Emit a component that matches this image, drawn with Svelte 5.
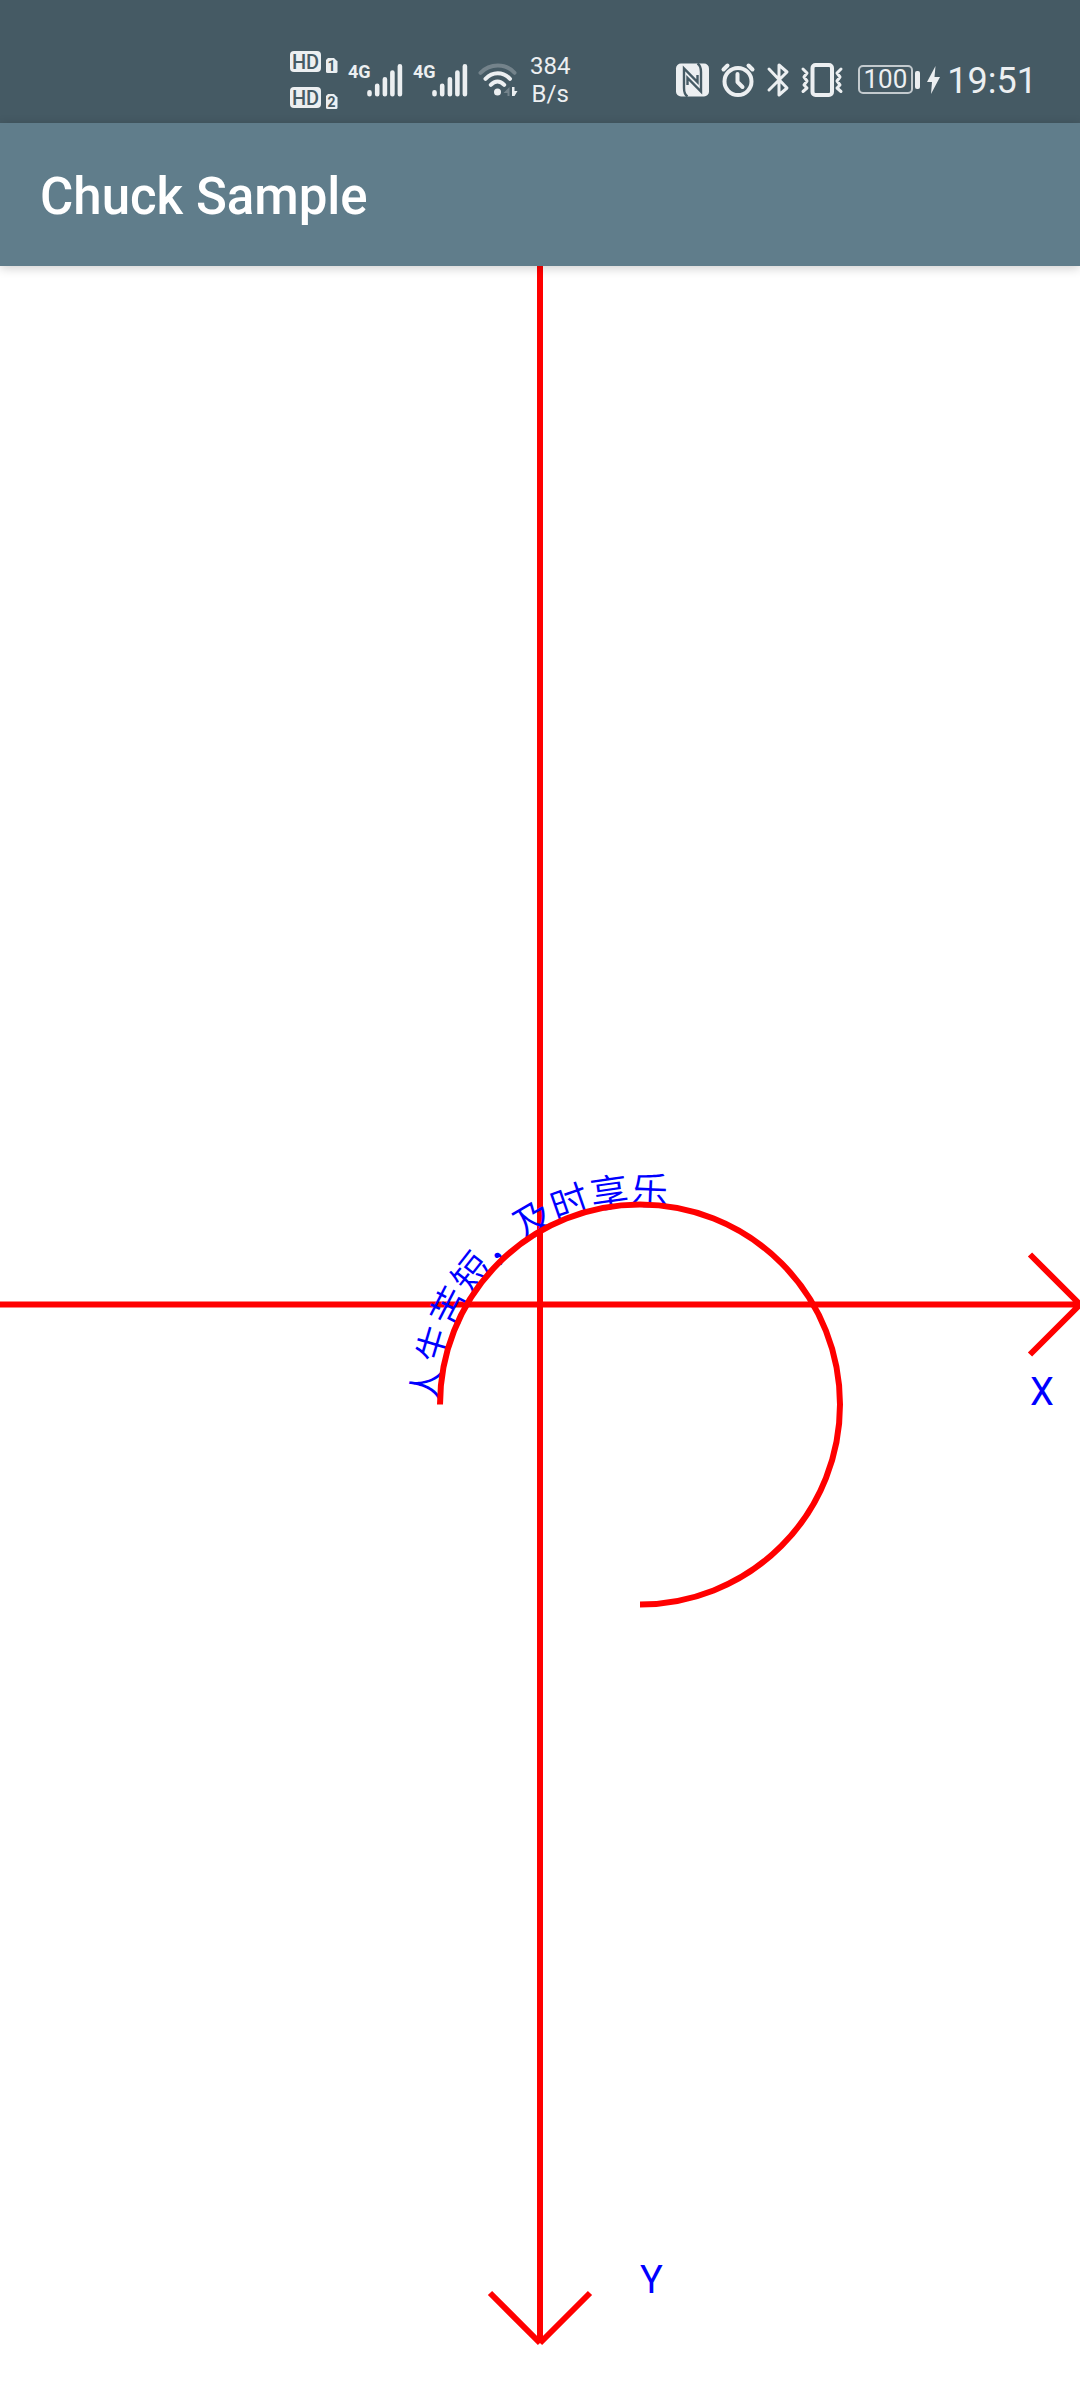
<script>
  const MARGIN = 100;
  const ARROW = 50;
  const RADIUS = 200;

  let width = $state(1080);
  let height = $state(2077);

  let cx = $derived(width / 2);
  let cy = $derived(height / 2);
  let ax = $derived(cx + MARGIN);
  let ay = $derived(cy + MARGIN);
  let arc = $derived(
    `M${ax - RADIUS} ${ay}A${RADIUS} ${RADIUS} 0 1 1 ${ax} ${ay + RADIUS}`
  );
</script>

{#snippet signal()}
  <svg class="icon" width="55" height="34" viewBox="0 0 55 34">
    <text class="net" x="0" y="15">4G</text>
    <path class="bars" d="M21.5 29.3V31.2M29.2 22.8V31.2M36.9 16.2V31.2M44.4 9.6V31.2M51.9 3.3V31.2" />
  </svg>
{/snippet}

<div class="screen">
  <div class="status">
    <div class="group left">
      <svg class="icon" width="48" height="58" viewBox="0 0 48 58">
        <rect x="0" y="0" width="31" height="21" rx="4" />
        <text class="hd" x="15.5" y="18">HD</text>
        <path d="M38 7H44L47.500 10.500V20.500Q47.500 22 46 22H37.500Q36 22 36 20.500V9Z" />
        <text class="sim" x="41.500" y="19.500">1</text>
        <rect x="0" y="36" width="31" height="21" rx="4" />
        <text class="hd" x="15.5" y="54">HD</text>
        <path d="M38 43H44L47.500 46.500V56.500Q47.500 58 46 58H37.500Q36 58 36 56.500V45Z" />
        <text class="sim" x="41.500" y="55.500">2</text>
      </svg>
      {@render signal()}
      {@render signal()}
      <svg class="icon wifi" width="40" height="34" viewBox="0 0 40 34">
        <path class="line faint" d="M2.500 9.800C12 0 28 0 36.500 9.800" />
        <path class="line" d="M7.500 15.800C14.500 8.500 25 8.500 32 15.800M12.800 21.800C17 17.500 22 17.500 26.200 21.800" />
        <circle cx="19.500" cy="29" r="3.500" />
        <path class="dim" d="M31.500 24V33H29.500V30H25.500Z" />
        <path d="M34 24V33H36.500L39.500 28H36.500V24Z" />
      </svg>
      <span class="speed">384<br />B/s</span>
    </div>
    <div class="group right">
      <svg class="icon" width="33" height="34" viewBox="0 0 33 34">
        <rect y=".5" width="33" height="33" rx="5" />
        <path class="cut" d="M11.500 33.500C8.500 31.500 8 29 8 25V5.500L21.500 19V12M21.500 .5C24.500 2.500 25 5 25 9V28.500L11.500 15V22" />
      </svg>
      <svg class="icon" width="34" height="34" viewBox="0 0 34 34">
        <circle class="line" cx="17" cy="18.500" r="13.500" />
        <path class="line" d="M16.500 11V19L21.500 24" />
        <path class="line" d="M2.500 6.500L6.500 2.500M27.500 2.500L31.500 6.500" />
      </svg>
      <svg class="icon" width="22" height="36" viewBox="0 0 22 36">
        <path class="line thin" d="M2 7L20 26L12 33V3L20 10L2 28" />
      </svg>
      <svg class="icon" width="42" height="34" viewBox="0 0 42 34">
        <rect class="line" x="11.500" y="2" width="19.500" height="30" rx="3" />
        <path class="line thin" d="M2 6L6 10L3 14L6 18L3 22L6 25L2 28.500M40 6L36 10L39 14L36 18L39 22L36 25L40 28.500" />
      </svg>
      <div class="power">
        <span class="battery">100</span>
        <svg class="icon" width="5" height="18" viewBox="0 0 5 18"><rect width="5" height="18" rx="2" /></svg>
        <svg class="icon bolt" width="13" height="28" viewBox="0 0 13 28"><path d="M8.500 0L0 16H5L4 28L13 11H7.500Z" /></svg>
        <span class="time">19:51</span>
      </div>
    </div>
  </div>
  <header><h1>Chuck Sample</h1></header>
  <main bind:clientWidth={width} bind:clientHeight={height}>
    <svg class="plot">
      <path class="stroke" d="M0 {cy}H{width}M{width - ARROW} {cy - ARROW}L{width} {cy}M{width - ARROW} {cy + ARROW}L{width} {cy}" />
      <path class="stroke" d="M{cx} 0V{height}M{cx - ARROW} {height - ARROW}L{cx} {height}M{cx + ARROW} {height - ARROW}L{cx} {height}" />
      <text class="label" x={width - ARROW} y={cy + MARGIN}>X</text>
      <text class="label" x={cx + MARGIN} y={height - ARROW}>Y</text>
      <path id="arc" class="guide" d={arc} />
      <text class="label motto" lang="zh-CN"><textPath href="#arc">人生苦短，及时享乐</textPath></text>
      <path class="stroke" d={arc} />
    </svg>
  </main>
</div>

<style>
  :global(body) {
    margin: 0;
    background: #fff;
  }
  .screen {
    display: flex;
    flex-direction: column;
    box-sizing: border-box;
    height: 100vh;
    padding-bottom: 57px;
    font-family: Roboto, "Noto Sans CJK SC", sans-serif;
  }
  .status {
    display: flex;
    flex: none;
    align-items: center;
    justify-content: space-between;
    box-sizing: border-box;
    height: 123px;
    padding: 36px 43px 0 290px;
    background: #455a64;
    color: #eceff1;
  }
  .group {
    display: flex;
    align-items: center;
  }
  .left {
    gap: 10px;
  }
  .right {
    gap: 12px;
  }
  .icon {
    display: block;
    flex: none;
    overflow: visible;
    fill: #eceff1;
  }
  .hd {
    fill: #455a64;
    font-size: 20px;
    font-weight: 500;
    text-anchor: middle;
  }
  .sim {
    fill: #455a64;
    font-size: 14px;
    font-weight: 700;
    text-anchor: middle;
  }
  .net {
    font-size: 18px;
    font-weight: 700;
  }
  .bars {
    fill: none;
    stroke: #eceff1;
    stroke-width: 4.6;
    stroke-linecap: round;
  }
  .line {
    fill: none;
    stroke: #eceff1;
    stroke-width: 4;
    stroke-linecap: round;
    stroke-linejoin: round;
  }
  .thin {
    stroke-width: 3;
  }
  .faint {
    stroke: #74838b;
  }
  .dim {
    fill: #74838b;
  }
  .cut {
    fill: none;
    stroke: #455a64;
    stroke-width: 2.4;
  }
  .speed {
    padding-left: 2px;
    font-size: 24px;
    line-height: 28px;
    text-align: center;
  }
  .power {
    display: flex;
    align-items: center;
    gap: 2px;
    padding-left: 3px;
  }
  .battery {
    box-sizing: border-box;
    padding: 0 4px;
    border: 2px solid #c3cace;
    border-radius: 5px;
    font-size: 26px;
    line-height: 25px;
  }
  .bolt {
    margin: 0 5px;
  }
  .time {
    padding-top: 2px;
    font-size: 36px;
    line-height: 40px;
  }
  header {
    position: relative;
    display: flex;
    flex: none;
    align-items: center;
    box-sizing: border-box;
    height: 143px;
    padding: 5px 40px 0;
    background: #607d8b;
    box-shadow: 0 2px 10px rgba(0, 0, 0, 0.2);
  }
  h1 {
    margin: 0;
    color: #fff;
    font-size: 51px;
    font-weight: 500;
    line-height: 60px;
  }
  main {
    flex: 1;
    min-height: 0;
  }
  .plot {
    display: block;
    width: 100%;
    height: 100%;
    overflow: visible;
  }
  .stroke {
    fill: none;
    stroke: #f00;
    stroke-width: 6;
  }
  .guide {
    fill: none;
  }
  .label {
    fill: #00f;
    font-size: 38px;
    font-weight: 400;
  }
  .motto {
    font-weight: 350;
  }
</style>
